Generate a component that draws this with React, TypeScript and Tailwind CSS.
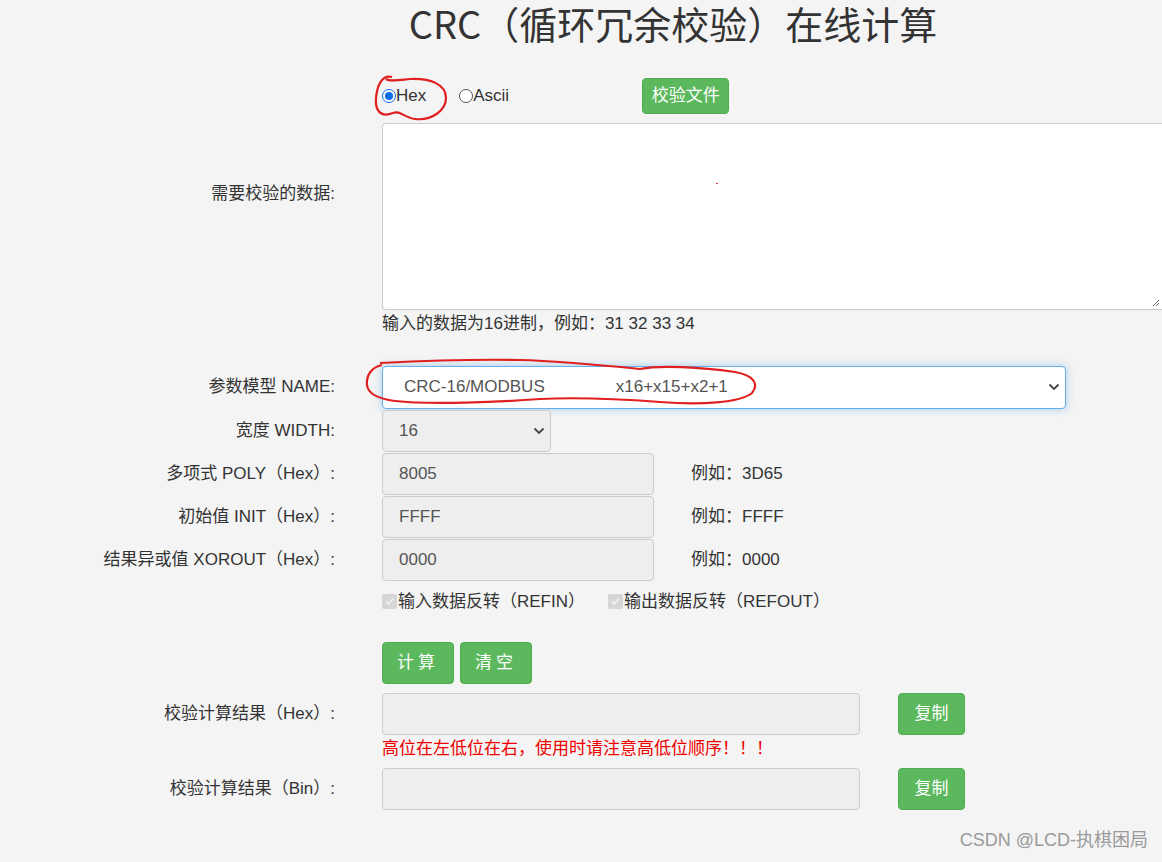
import React from "react";

const font = { fontFamily: '"Liberation Sans", "Noto Sans CJK SC", sans-serif' };

function Label({ children, top }: { children: React.ReactNode; top?: boolean }) {
  return (
    <div
      className={
        "flex justify-end pr-[47px] text-[17px] text-[#333] " + (top ? "items-start pt-[58px]" : "items-center")
      }
    >
      {children}
    </div>
  );
}

function Chevron() {
  return (
    <svg width="12" height="8" viewBox="0 0 12 8" className="text-[#444]">
      <path d="M1.5 1.5 L6 6 L10.5 1.5" fill="none" stroke="currentColor" strokeWidth="1.8" />
    </svg>
  );
}

function GreenBtn({ children, className }: { children: React.ReactNode; className?: string }) {
  return (
    <button className={"rounded-[4px] border border-[#4cae4c] bg-[#5cb85c] text-white text-[17px] " + (className ?? "")}>
      {children}
    </button>
  );
}

function ReadOnlyInput({ value }: { value: string }) {
  return (
    <div className="flex h-[42px] w-[272px] items-center rounded-[4px] border border-[#ccc] bg-[#eee] px-[16px] text-[17px] text-[#555]">
      {value}
    </div>
  );
}

function ParamRow({ label, value, example }: { label: string; value: string; example: string }) {
  return (
    <div className="grid grid-cols-[382px_1fr] h-[43px]">
      <Label>{label}</Label>
      <div className="flex items-center">
        <ReadOnlyInput value={value} />
        <span className="ml-[37px] text-[17px] text-[#333]">例如：{example}</span>
      </div>
    </div>
  );
}

function Checkbox({ label }: { label: string }) {
  return (
    <label className="flex items-center text-[17px] text-[#333]">
      <span className="mr-[1px] flex h-[15px] w-[15px] items-center justify-center rounded-[2px] bg-[#d6d6d6]">
        <svg width="11" height="11" viewBox="0 0 11 11">
          <path d="M2 5.5 L4.5 8 L9 2.5" fill="none" stroke="#f0f0f0" strokeWidth="1.8" />
        </svg>
      </span>
      {label}
    </label>
  );
}

export default function App() {
  return (
    <div className="relative h-[862px] w-[1162px] overflow-hidden bg-[#f4f4f4]" style={font}>
      <h1
        className="text-center text-[38px] leading-[46px] text-[#333]"
        style={{ fontFamily: '"Noto Sans CJK SC", sans-serif', paddingLeft: 184 }}
      >
        CRC（循环冗余校验）在线计算
      </h1>

      <div className="mt-[32px] grid grid-cols-[382px_1fr]">
        <div />
        <div className="flex h-[36px] items-center">
          <label className="flex items-center text-[17px] text-[#333]">
            <span className="flex h-[14px] w-[14px] items-center justify-center rounded-full border-[1.5px] border-[#0a6cf0] bg-white">
              <span className="h-[8px] w-[8px] rounded-full bg-[#0a6cf0]" />
            </span>
            <span>Hex</span>
          </label>
          <label className="ml-[33px] flex items-center text-[17px] text-[#333]">
            <span className="h-[14px] w-[14px] rounded-full border border-[#555] bg-white" />
            <span>Ascii</span>
          </label>
          <GreenBtn className="ml-[133px] h-[36px] w-[87px] text-[15px]">校验文件</GreenBtn>
        </div>
      </div>

      <div className="mt-[9px] grid grid-cols-[382px_1fr]">
        <Label top>需要校验的数据:</Label>
        <div className="relative h-[187px] rounded-l-[4px] border border-r-0 border-[#ccc] bg-white">
          <span className="absolute left-[333px] top-[59px] h-[1px] w-[2px] bg-[#d33]" />
          <svg className="absolute bottom-[2px] right-[2px]" width="8" height="8" viewBox="0 0 8 8">
            <path d="M7 1 L1 7 M7 4 L4 7" stroke="#777" strokeWidth="1" />
          </svg>
        </div>
      </div>
      <div className="grid grid-cols-[382px_1fr]">
        <div />
        <div className="pt-[1px] text-[17px] text-[#333]">输入的数据为16进制，例如：31 32 33 34</div>
      </div>

      <div className="mt-[29px] grid grid-cols-[382px_1fr]">
        <Label>参数模型 NAME:</Label>
        <div className="flex h-[43px] w-[684px] items-center justify-between rounded-[4px] border border-[#66afe9] bg-white pl-[21px] pr-[5px] text-[17px] text-[#555] shadow-[0_0_8px_rgba(102,175,233,0.6)]">
          <span>
            CRC-16/MODBUS<span className="inline-block w-[71px]" />x16+x15+x2+1
          </span>
          <Chevron />
        </div>
      </div>

      <div className="mt-[1px] grid grid-cols-[382px_1fr] h-[43px]">
        <Label>宽度 WIDTH:</Label>
        <div className="flex items-center">
          <div className="flex h-[42px] w-[169px] items-center justify-between rounded-[4px] border border-[#ccc] bg-[#eee] pl-[16px] pr-[5px] text-[17px] text-[#555]">
            <span>16</span>
            <Chevron />
          </div>
        </div>
      </div>

      <ParamRow label="多项式 POLY（Hex）:" value="8005" example="3D65" />
      <ParamRow label="初始值 INIT（Hex）:" value="FFFF" example="FFFF" />
      <ParamRow label="结果异或值 XOROUT（Hex）:" value="0000" example="0000" />

      <div className="mt-[7px] grid grid-cols-[382px_1fr]">
        <div />
        <div className="flex gap-[23px]">
          <Checkbox label="输入数据反转（REFIN）" />
          <Checkbox label="输出数据反转（REFOUT）" />
        </div>
      </div>

      <div className="mt-[28px] grid grid-cols-[382px_1fr]">
        <div />
        <div className="flex gap-[6px]">
          <GreenBtn className="h-[42px] w-[72px] tracking-[4px]">计算</GreenBtn>
          <GreenBtn className="h-[42px] w-[72px] tracking-[4px]">清空</GreenBtn>
        </div>
      </div>

      <div className="mt-[9px] grid grid-cols-[382px_1fr]">
        <Label>校验计算结果（Hex）:</Label>
        <div className="flex items-center">
          <div className="h-[42px] w-[478px] rounded-[4px] border border-[#ccc] bg-[#eee]" />
          <GreenBtn className="ml-[38px] h-[42px] w-[67px]">复制</GreenBtn>
        </div>
      </div>
      <div className="grid grid-cols-[382px_1fr]">
        <div />
        <div className="pt-[1px] text-[17px] text-[#e00]">高位在左低位在右，使用时请注意高低位顺序！！！</div>
      </div>

      <div className="mt-[6px] grid grid-cols-[382px_1fr]">
        <Label>校验计算结果（Bin）:</Label>
        <div className="flex items-center">
          <div className="h-[42px] w-[478px] rounded-[4px] border border-[#ccc] bg-[#eee]" />
          <GreenBtn className="ml-[38px] h-[42px] w-[67px]">复制</GreenBtn>
        </div>
      </div>

      <div className="absolute bottom-[8px] right-[14px] text-[18px] text-[#9a9a9a]">CSDN @LCD-执棋困局</div>

      <svg className="pointer-events-none absolute left-0 top-0" width="1162" height="862">
        <path
          d="M392 77 C382 74 377 86 376 98 C375 110 380 118 393 113 C400 110 405 118 415 119 C432 121 446 110 446 98 C446 84 430 78 410 79 C400 80 390 82 386 79"
          fill="none"
          stroke="#e02020"
          strokeWidth="2.2"
        />
        <path
          d="M382 365 C372 367 366 375 367 385 C368 395 380 399 395 401 C430 405 500 402 540 399 C580 397 620 399 660 402 C700 405 740 403 752 393 C760 383 752 375 735 372 C700 367 660 365 640 369 C600 365 560 361 520 360 C470 359 420 361 380 363"
          fill="none"
          stroke="#e02020"
          strokeWidth="2.2"
        />
      </svg>
    </div>
  );
}
